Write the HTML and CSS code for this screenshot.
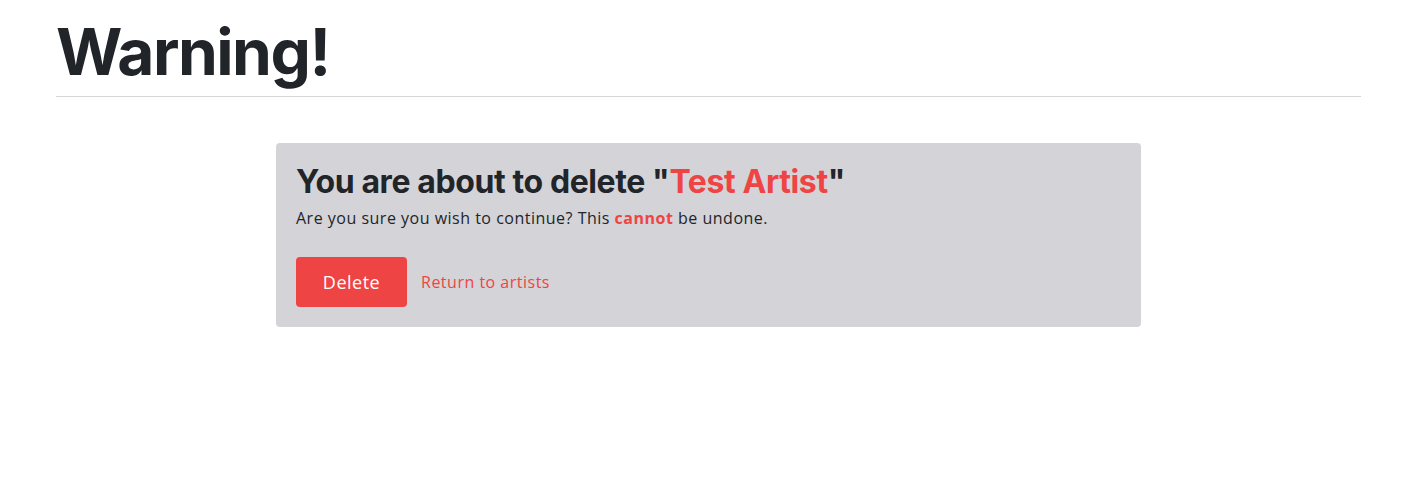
FILE: index.html
```html
<!DOCTYPE html>
<html lang="en">
<head>
<meta charset="utf-8">
<title>Warning</title>
<link rel="stylesheet" href="styles.css">
</head>
<body>
<main class="container">
  <h1 class="page-title">Warning!</h1>
  <hr class="divider">
  <section class="confirm-card">
    <h2 class="confirm-title">You are about to delete "<span class="accent">Test Artist</span>"</h2>
    <p class="confirm-text">Are you sure you wish to continue? This <strong class="accent">cannot</strong> be undone.</p>
    <div class="actions">
      <button class="btn-delete" type="button">Delete</button>
      <a class="link-return" href="#">Return to artists</a>
    </div>
  </section>
</main>
</body>
</html>
```
FILE: styles.css
```css
* { box-sizing: border-box; }
html, body { margin: 0; padding: 0; background: #fff; }
body {
  font-family: "Inter", "Noto Sans", sans-serif;
  color: #212529;
}
.container {
  padding: 0 40px 0 56px;
}
.page-title {
  margin: 0;
  padding-top: 14px;
  font-family: "Inter", sans-serif;
  font-size: 64px;
  font-weight: 700;
  line-height: 1.2;
  letter-spacing: -1.5px;
  color: #212529;
}
.divider {
  margin: 5px 0 0;
  border: 0;
  border-top: 1px solid #d6d6d6;
}
.confirm-card {
  width: 865px;
  margin: 46px auto 0;
  background: #d4d3d8;
  border-radius: 4px;
  padding: 20px 20px 20px;
}
.confirm-title {
  margin: 0;
  font-family: "Inter", sans-serif;
  font-size: 32px;
  font-weight: 700;
  line-height: 1.2;
  letter-spacing: -0.4px;
}
.accent { color: #ef4444; }
.confirm-text {
  margin: 5px 0 0;
  font-family: "Open Sans", sans-serif;
  font-size: 16px;
  line-height: 1.5;
  letter-spacing: 0.5px;
  color: #212529;
}
.confirm-text strong { font-weight: 700; }
.actions {
  display: flex;
  align-items: center;
  gap: 14px;
  margin-top: 27px;
}
.btn-delete {
  width: 111px;
  height: 50px;
  border: 0;
  border-radius: 4px;
  background: #ef4444;
  color: #fff;
  font-family: "Open Sans", sans-serif;
  font-size: 18px;
  letter-spacing: 0.5px;
  cursor: pointer;
}
.link-return {
  color: #ef4444;
  text-decoration: none;
  font-family: "Open Sans", sans-serif;
  font-size: 16px;
  letter-spacing: 0.5px;
}
```
